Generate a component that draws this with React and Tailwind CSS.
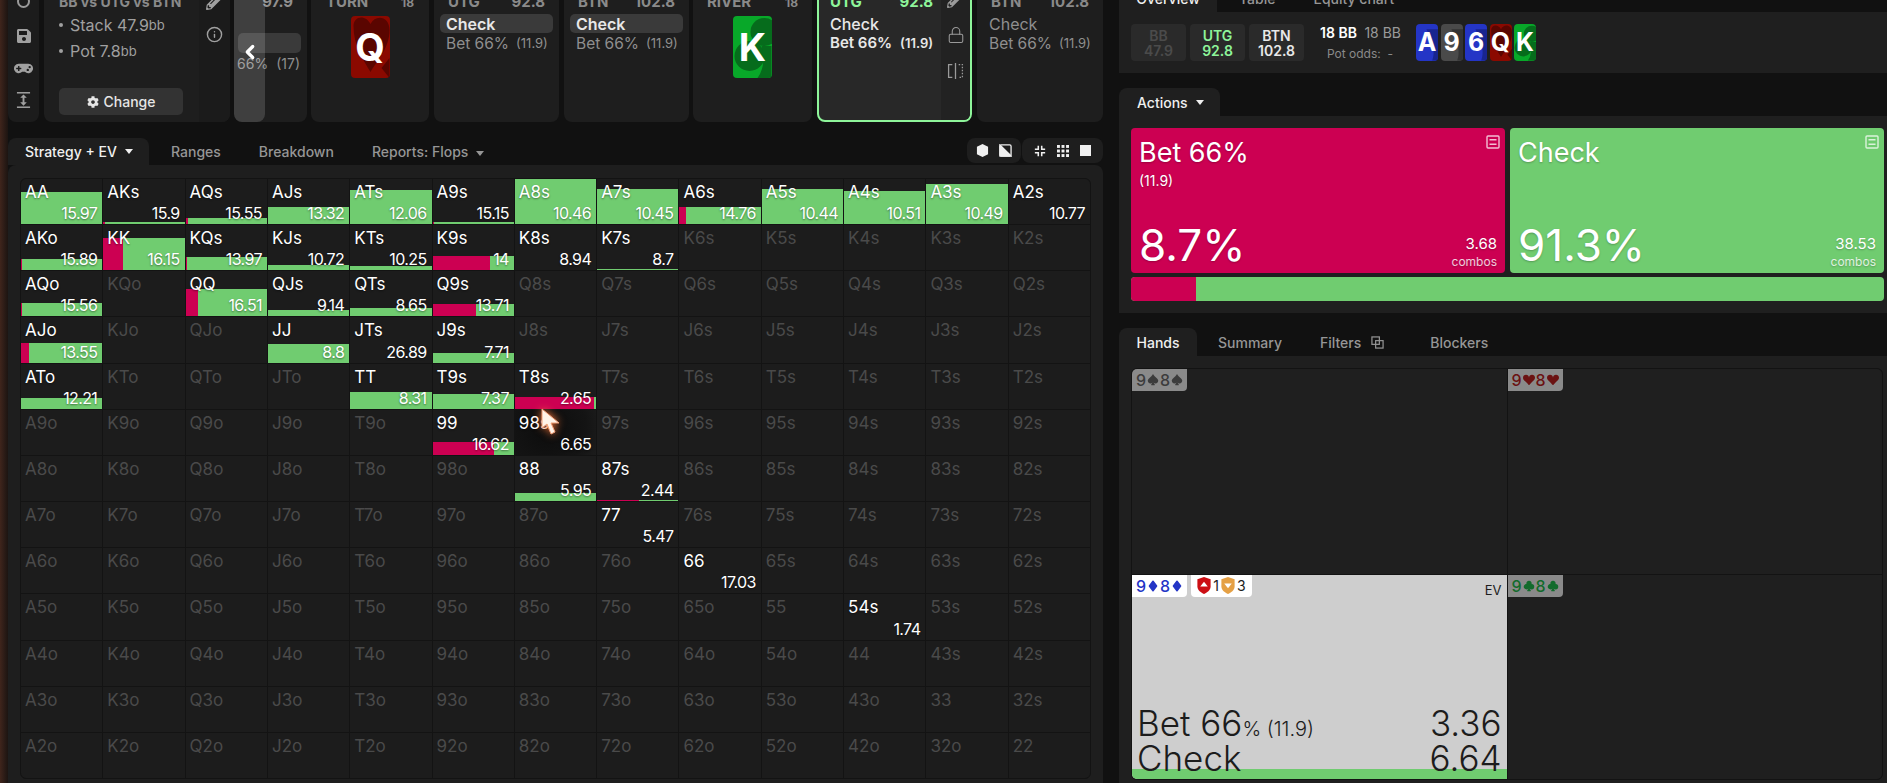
import React from 'react'
import { ChevronLeft, Info, Lock } from 'lucide-react'
import { FaCog, FaGamepad, FaPencilAlt, FaSave } from 'react-icons/fa'
import { BsSuitClubFill, BsSuitDiamondFill, BsSuitHeartFill, BsSuitSpadeFill } from 'react-icons/bs'

const ranks = ['A', 'K', 'Q', 'J', 'T', '9', '8', '7', '6', '5', '4', '3', '2']

// label: [value, bar height px, red share %]
const cells = {
  AA: ['15.97', 32, 0], AKs: ['15.9', 2, 2], AQs: ['15.55', 6, 3], AJs: ['13.32', 17, 0], ATs: ['12.06', 34, 0],
  A9s: ['15.15', 2, 1], A8s: ['10.46', 45, 0], A7s: ['10.45', 35, 0], A6s: ['14.76', 17, 8], A5s: ['10.44', 35, 0],
  A4s: ['10.51', 33, 0], A3s: ['10.49', 40, 0], A2s: ['10.77', 0, 0],
  AKo: ['15.89', 11, 1], KK: ['16.15', 32, 24], KQs: ['13.97', 13, 1], KJs: ['10.72', 5, 0], KTs: ['10.25', 4, 0],
  K9s: ['14', 14, 71], K8s: ['8.94', 0, 0], K7s: ['8.7', 1, 0],
  AQo: ['15.56', 13, 1], QQ: ['16.51', 27, 15], QJs: ['9.14', 6, 0], QTs: ['8.65', 8, 0], Q9s: ['13.71', 12, 53],
  AJo: ['13.55', 20, 10], JJ: ['8.8', 19, 0], JTs: ['26.89', 0, 0], J9s: ['7.71', 10, 0],
  ATo: ['12.21', 11, 0], TT: ['8.31', 17, 0], T9s: ['7.37', 15, 0], T8s: ['2.65', 12, 97],
  99: ['16.62', 13, 75], '98s': ['6.65', 0, 0],
  88: ['5.95', 8, 0], '87s': ['2.44', 1, 52],
  77: ['5.47', 0, 0], 66: ['17.03', 0, 0], '54s': ['1.74', 0, 0],
}

const cellLabel = (r, c) => {
  if (r === c) return ranks[r] + ranks[c]
  return r < c ? ranks[r] + ranks[c] + 's' : ranks[c] + ranks[r] + 'o'
}

const GridCell = ({ label }) => {
  const data = cells[label]
  if (!data) {
    return (
      <div className="bg-[#1c1c1c] pl-1 pt-[3px] text-[17px] leading-5 text-[#4a4a4a]">{label}</div>
    )
  }
  const [value, height, red] = data
  return (
    <div className={`relative overflow-hidden ${label === '98s' ? 'bg-[radial-gradient(circle_at_40%_40%,#0c0c0c,#141414_70%,#1c1c1c)]' : 'bg-[#1c1c1c]'}`}>
      <div className="absolute inset-x-0 bottom-0 flex bg-[#70cc70]" style={{ height }}>
        <div className="bg-[#cc0052]" style={{ width: `${red}%` }} />
      </div>
      <div className="relative flex h-full flex-col justify-between pb-px pl-1 pr-[5px] pt-[3px] text-white [text-shadow:0_1px_2px_rgba(0,0,0,0.45)]">
        <div className="text-[17px] leading-5">{label}</div>
        <div className="text-right text-[16px] leading-5 tracking-[-0.6px]">{value}</div>
      </div>
    </div>
  )
}

const SuitArt = ({ suit, color }) => {
  if (suit === 'heart') {
    return (
      <svg viewBox="0 0 38 62" className="absolute inset-0 h-full w-full">
        <path d="M2 10 C2 0 14 -2 19 8 C24 -2 38 0 38 14 C38 32 26 44 19 56 C12 44 2 30 2 10Z" fill={color} />
        <path d="M38 42 L30 52 L38 62Z" fill={color} />
      </svg>
    )
  }
  if (suit === 'club') {
    return (
      <svg viewBox="0 0 38 62" className="absolute inset-0 h-full w-full">
        <circle cx="31" cy="16" r="14" fill={color} />
        <circle cx="16" cy="40" r="15" fill={color} />
        <path d="M28 30 L38 30 L38 62 L24 62 Q33 50 28 30Z" fill={color} />
      </svg>
    )
  }
  return (
    <svg viewBox="0 0 38 62" className="absolute inset-0 h-full w-full">
      <path d="M38 8 L38 62 L28 62 Q36 40 18 8Z" fill={color} />
    </svg>
  )
}

const BigCard = ({ rank, bg, dark, suit }) => (
  <div className="relative flex h-[62px] w-[39px] items-center justify-center overflow-hidden rounded-[4px]" style={{ backgroundColor: bg }}>
    <SuitArt suit={suit} color={dark} />
    <span className="relative text-[38px] font-bold leading-none text-white">{rank}</span>
  </div>
)

const SmallCard = ({ rank, bg, dark, suit }) => (
  <div className="relative flex h-[37px] w-[22px] items-center justify-center overflow-hidden rounded-[4px]" style={{ backgroundColor: bg }}>
    <SuitArt suit={suit} color={dark} />
    <span className="relative text-[25px] font-bold leading-none text-white">{rank}</span>
  </div>
)

const CardHeader = ({ left, right, className = 'text-[#8a8a8a]' }) => (
  <div className={`flex h-5 items-center justify-between text-[15px] font-bold leading-5 ${className}`}>
    <span>{left}</span>
    <span>{right}</span>
  </div>
)

const ActionCard = ({ pos, stack, width, chip = true }) => (
  <div className={`h-[142px] shrink-0 rounded-b-lg bg-[#1e1e1e] px-[6px] pt-[12px] ${width}`}>
    <div className="px-2"><CardHeader left={pos} right={stack} /></div>
    <div className={`mt-[2px] flex h-[19px] items-center rounded-[5px] px-[6px] text-[16px] ${chip ? 'bg-[#3a3a3a] font-semibold text-[#e8e8e8]' : 'font-normal text-[#8f8f8f]'}`}>Check</div>
    <div className="mt-px flex h-[19px] items-center whitespace-nowrap px-[6px] text-[15.5px] text-[#8f8f8f]">
      Bet 66%<span className="ml-[7px] text-[13px]">(11.9)</span>
    </div>
  </div>
)

const SplitIcon = () => (
  <svg viewBox="0 0 16 16" className="h-[18px] w-[17px]" fill="none" stroke="#9a9a9a" strokeWidth="1.2">
    <path d="M5 2H1.5v12H5" />
    <path d="M8 0.5v15" />
    <path d="M11 2h3.5v12H11" strokeDasharray="1.4 1.4" />
  </svg>
)

const SpreadIcon = () => (
  <svg viewBox="0 0 16 18" className="h-[18px] w-[15px]" fill="#a0a0a0">
    <rect x="1" y="0.5" width="14" height="1.6" />
    <rect x="1" y="15.9" width="14" height="1.6" />
    <path d="M8 3 L11.5 6.5H9v5h2.5L8 15 4.5 11.5H7v-5H4.5Z" />
  </svg>
)

const NoteIcon = () => (
  <svg viewBox="0 0 14 14" className="h-[14px] w-[14px]" fill="none" stroke="rgba(255,255,255,0.75)" strokeWidth="1.4">
    <rect x="1" y="1" width="12" height="12" rx="1" />
    <path d="M3.5 4.8h7M3.5 9.2h7" />
  </svg>
)

const Caret = () => <span className="ml-2 inline-block border-x-[4px] border-t-[5px] border-x-transparent border-t-current align-middle" />

const Shield = ({ fill, up }) => (
  <svg viewBox="0 0 14 18" className="h-[17px] w-[14px]">
    <path d="M7 0 L14 2.5 V10 C14 14 10 16.5 7 18 C4 16.5 0 14 0 10 V2.5Z" fill={fill} />
    <path d={up ? 'M7 5 L11 10 H3Z' : 'M3 7 H11 L7 12Z'} fill="#fff" />
  </svg>
)

const PosChip = ({ pos, stack, className }) => (
  <div className={`flex h-[37px] w-[55px] flex-col items-center justify-center rounded-[4px] bg-[#2a2a2a] text-[14px] font-semibold leading-[15px] ${className}`}>
    <span>{pos}</span>
    <span>{stack}</span>
  </div>
)

const ActionTile = ({ bg, title, sub, pct, combos }) => (
  <div className={`relative flex h-[145px] flex-1 flex-col justify-between rounded-[4px] px-2 pb-[3px] pt-[9px] text-white [text-shadow:0_1px_2px_rgba(0,0,0,0.25)] ${bg}`}>
    <div className="absolute right-[5px] top-[7px]"><NoteIcon /></div>
    <div>
      <div className="text-[27px] leading-8">{title}</div>
      {sub && <div className="mt-[2px] text-[14px] leading-5">{sub}</div>}
    </div>
    <div className="flex items-end justify-between">
      <div className="text-[44px] leading-[50px]">{pct}</div>
      <div className="text-right leading-none">
        <div className="text-[15px] leading-5">{combos}</div>
        <div className="text-[12px] leading-4 text-white/80">combos</div>
      </div>
    </div>
  </div>
)

const HandChip = ({ Suit, className }) => (
  <div className={`flex h-[22px] w-[55px] items-center justify-center gap-px rounded-br-[4px] text-[16px] font-medium ${className}`}>
    9<Suit size={12} />8<Suit size={12} />
  </div>
)

const App = () => {
  return (
    <div className="relative flex h-[783px] w-[1887px] overflow-hidden bg-[#111111] font-[family-name:Inter,sans-serif]">
      <div className="w-2 shrink-0 bg-gradient-to-r from-[#40251c] to-[#1c1411]" />

      <div className="w-[1095px] shrink-0">
        {/* top spot strip, page is scrolled a bit so it gets cut */}
        <div className="relative -mt-5 flex h-[142px] gap-[4px]">
          <div className="flex h-[142px] w-[31px] shrink-0 flex-col items-center rounded-b-lg bg-[#1c1c1c] pt-[15px] text-[#a0a0a0]">
            <div className="h-[13px] w-[13px] rounded-full border-2 border-[#9a9a9a]" />
            <FaSave size={16} className="mt-[20px]" />
            <FaGamepad size={19} className="mt-[15px]" />
            <div className="mt-[13px]"><SpreadIcon /></div>
          </div>

          <div className="ml-px flex h-[142px] w-[186px] shrink-0 rounded-b-lg bg-[#1e1e1e]">
            <div className="flex w-[155px] flex-col pl-[15px] pr-4 pt-[12px]">
              <div className="whitespace-nowrap text-[14px] font-bold leading-5 text-[#8a8a8a]">BB vs UTG vs BTN</div>
              <div className="mt-[1px] flex items-center text-[16px] leading-6 text-[#a0a0a0]"><span className="mr-[7px] h-1 w-1 rounded-full bg-[#a0a0a0]" />Stack 47.9<span className="text-[13px]">bb</span></div>
              <div className="mt-[2px] flex items-center text-[16px] leading-6 text-[#a0a0a0]"><span className="mr-[7px] h-1 w-1 rounded-full bg-[#a0a0a0]" />Pot 7.8<span className="text-[13px]">bb</span></div>
              <button className="mt-[25px] flex h-[27px] items-center justify-center gap-[5px] rounded-[5px] bg-[#333333] text-[14px] font-medium text-[#e6e6e6]"><FaCog size={12} />Change</button>
            </div>
            <div className="flex flex-1 flex-col items-center gap-[16px] rounded-br-lg bg-[#1b1b1b] pt-[12px] text-[#a0a0a0]">
              <FaPencilAlt size={18} />
              <Info size={17} />
            </div>
          </div>

          <div className="flex h-[142px] w-[73px] shrink-0 flex-col items-end rounded-b-lg bg-[#1e1e1e] pr-[6px] pt-[12px] text-[#8f8f8f]">
            <div className="pr-2 text-[15px] font-bold leading-5">97.9</div>
            <div className="mt-[21px] h-5 w-[63px] rounded-[5px] bg-[#3a3a3a]" />
            <div className="mt-[1px] whitespace-nowrap pr-[1px] text-[14px] leading-5">66%<span className="ml-2">(17)</span></div>
          </div>

          <div className="flex h-[142px] w-[118px] shrink-0 flex-col rounded-b-lg bg-[#1e1e1e] px-[15px] pt-[12px]">
            <CardHeader left="TURN" right={<span className="text-[12px]">18</span>} />
            <div className="mt-[4px] flex justify-center"><BigCard rank="Q" bg="#8b0900" dark="#5a0500" suit="heart" /></div>
          </div>

          <div className="ml-px flex gap-[5px]">
            <ActionCard pos="UTG" stack="92.8" width="w-[125px]" />
            <ActionCard pos="BTN" stack="102.8" width="w-[125px]" />
          </div>

          <div className="flex h-[142px] w-[119px] shrink-0 flex-col rounded-b-lg bg-[#1e1e1e] px-[14px] pt-[12px]">
            <CardHeader left="RIVER" right={<span className="text-[12px]">18</span>} />
            <div className="mt-[4px] flex justify-center"><BigCard rank="K" bg="#08a829" dark="#066c1c" suit="club" /></div>
          </div>

          <div className="ml-px flex h-[142px] w-[155px] shrink-0 overflow-hidden rounded-b-lg border-2 border-[#8ef59a] bg-[#282828]">
            <div className="flex-1 pl-[11px] pr-[8px] pt-[10px]">
              <CardHeader left="UTG" right="92.8" className="text-[#8ef59a]" />
              <div className="mt-[2px] flex h-[19px] items-center text-[16px] font-medium text-[#e8e8e8]">Check</div>
              <div className="mt-px flex h-[19px] items-center whitespace-nowrap text-[15px] font-semibold text-[#e8e8e8]">Bet 66%<span className="ml-2 text-[13px]">(11.9)</span></div>
            </div>
            <div className="flex w-[32px] flex-col items-center gap-[18px] bg-[#222222] pt-[9px] text-[#9a9a9a]">
              <FaPencilAlt size={17} />
              <Lock size={18} strokeWidth={1.4} />
              <SplitIcon />
            </div>
          </div>

          <div className="ml-px">
            <ActionCard pos="BTN" stack="102.8" width="w-[126px]" chip={false} />
          </div>

          <div className="absolute left-[226px] top-0 flex h-[142px] w-[31px] items-center justify-center rounded-b-lg bg-white/15 pt-[2px]">
            <ChevronLeft size={22} strokeWidth={3.5} className="text-white" />
          </div>
        </div>

        <div className="mt-4 flex h-[27px] items-start justify-between">
          <div className="flex h-[27px] items-center text-[14px] font-medium text-[#969696]">
            <div className="flex h-[27px] w-[141px] items-center rounded-t-lg bg-[#1e1e1e] pl-[17px] text-[#f0f0f0]">Strategy + EV<Caret /></div>
            <div className="ml-[22px]">Ranges</div>
            <div className="ml-[38px]">Breakdown</div>
            <div className="ml-[38px]">Reports: Flops<Caret /></div>
          </div>
          <div className="flex gap-px text-[#f0f0f0]">
            <div className="flex h-[25px] w-[54px] items-center justify-around rounded-lg bg-[#1e1e1e] px-1">
              <svg viewBox="0 0 14 14" className="h-[13px] w-[13px]" fill="currentColor"><path d="M7 0 L13 3 V11 L7 14 L1 11 V3Z" /></svg>
              <svg viewBox="0 0 14 14" className="h-[13px] w-[13px]" fill="none" stroke="currentColor" strokeWidth="1.4"><rect x="1" y="1" width="12" height="12" rx="1.5" /><path d="M1 1 L13 13 V1Z" fill="currentColor" transform="rotate(180 7 7)" /></svg>
            </div>
            <div className="flex h-[25px] w-[81px] items-center justify-around rounded-lg bg-[#1e1e1e] px-[6px]">
              <svg viewBox="0 0 14 14" className="h-[12px] w-[12px]" fill="none" stroke="currentColor" strokeWidth="1.8"><path d="M5 1v4H1M9 1v4h4M5 13V9H1M9 13V9h4" /></svg>
              <svg viewBox="0 0 14 14" className="h-[12px] w-[12px]" fill="currentColor"><rect width="3.4" height="3.4" /><rect x="5.3" width="3.4" height="3.4" /><rect x="10.6" width="3.4" height="3.4" /><rect y="5.3" width="3.4" height="3.4" /><rect x="5.3" y="5.3" width="3.4" height="3.4" /><rect x="10.6" y="5.3" width="3.4" height="3.4" /><rect y="10.6" width="3.4" height="3.4" /><rect x="5.3" y="10.6" width="3.4" height="3.4" /><rect x="10.6" y="10.6" width="3.4" height="3.4" /></svg>
              <div className="h-[11px] w-[11px] bg-[#f0f0f0]" />
            </div>
          </div>
        </div>

        <div className="h-[618px] rounded-t-lg bg-[#1e1e1e] pl-3 pr-3 pt-[13px]">
          <div className="grid h-[601px] w-[1071px] grid-cols-[repeat(13,minmax(0,1fr))] grid-rows-[repeat(13,minmax(0,1fr))] gap-px overflow-hidden rounded-md border border-[#131313] bg-[#131313]">
            {ranks.map((_, r) => ranks.map((_, c) => {
              const label = cellLabel(r, c)
              return <GridCell key={label} label={label} />
            }))}
          </div>
        </div>
      </div>

      <div className="ml-[16px] flex-1">
        <div className="-mt-[15px] flex h-[27px] items-center text-[14px] font-medium text-[#969696]">
          <div className="flex h-[27px] w-[98px] items-center justify-center rounded-t-lg bg-[#1f1f1f] text-[#f0f0f0]">Overview</div>
          <div className="ml-[22px]">Table</div>
          <div className="ml-[38px]">Equity chart</div>
        </div>
        <div className="flex h-[61px] items-center gap-[4px] bg-[#1f1f1f] pl-3">
          <PosChip pos="BB" stack="47.9" className="text-[#4b4b4b]" />
          <PosChip pos="UTG" stack="92.8" className="text-[#8ef59a]" />
          <PosChip pos="BTN" stack="102.8" className="text-[#e8e8e8]" />
          <div className="ml-[12px] w-[80px] text-center">
            <div className="whitespace-nowrap text-[14px] font-semibold leading-5 text-white">18 BB <span className="ml-1 font-normal text-[#9a9a9a]">18 BB</span></div>
            <div className="mt-[3px] text-[12px] leading-4 text-[#8a8a8a]">Pot odds:&nbsp; -</div>
          </div>
          <div className="ml-[12px] flex gap-[2.5px]">
            <SmallCard rank="A" bg="#2435c6" dark="#182590" suit="diamond" />
            <SmallCard rank="9" bg="#4a4a4a" dark="#333333" suit="spade" />
            <SmallCard rank="6" bg="#2435c6" dark="#182590" suit="diamond" />
            <SmallCard rank="Q" bg="#8b0900" dark="#5a0500" suit="heart" />
            <SmallCard rank="K" bg="#08a829" dark="#066c1c" suit="club" />
          </div>
        </div>

        <div className="mt-[15px] flex h-[28px] w-[101px] items-center rounded-t-lg bg-[#1f1f1f] pl-[18px] text-[14px] font-medium text-[#f0f0f0]">Actions<Caret /></div>
        <div className="h-[197px] bg-[#1f1f1f] pl-3 pr-[3px] pt-3">
          <div className="flex gap-[5px]">
            <ActionTile bg="bg-[#cc0052]" title="Bet 66%" sub="(11.9)" pct="8.7%" combos="3.68" />
            <ActionTile bg="bg-[#70cc70]" title="Check" pct="91.3%" combos="38.53" />
          </div>
          <div className="mt-1 flex h-6 overflow-hidden rounded-[4px] bg-[#70cc70]">
            <div className="w-[65px] bg-[#cc0052]" />
          </div>
        </div>

        <div className="mt-[15px] flex h-[28px] items-center text-[14px] font-medium text-[#969696]">
          <div className="flex h-[28px] w-[78px] items-center justify-center rounded-t-lg bg-[#1f1f1f] text-[#f0f0f0]">Hands</div>
          <div className="ml-[21px]">Summary</div>
          <div className="ml-[38px] flex items-center gap-[10px]">Filters
            <svg viewBox="0 0 14 14" className="h-[13px] w-[13px]" fill="none" stroke="currentColor" strokeWidth="1.3"><rect x="1" y="1" width="8" height="8" /><rect x="5" y="5" width="8" height="8" /></svg>
          </div>
          <div className="ml-[46px]">Blockers</div>
        </div>
        <div className="h-[427px] bg-[#1f1f1f] pl-3 pr-1 pt-3">
          <div className="grid h-[412px] grid-cols-2 grid-rows-2 gap-px overflow-hidden rounded-md border border-[#131313] bg-[#131313]">
            <div className="bg-[#1f1f1f]"><HandChip Suit={BsSuitSpadeFill} className="bg-[#8a8a8a] text-[#3c3c3c]" /></div>
            <div className="bg-[#1f1f1f]"><HandChip Suit={BsSuitHeartFill} className="bg-[#8a8a8a] text-[#6b1212]" /></div>
            <div className="relative flex flex-col justify-between bg-[#cecece] text-[#1c1c1c]">
              <div className="absolute inset-x-0 bottom-0 h-[10px] bg-[#70cc70]" />
              <div className="flex items-start justify-between pr-[5px]">
                <div className="flex gap-1">
                  <HandChip Suit={BsSuitDiamondFill} className="bg-white text-[#2435c6]" />
                  <div className="flex h-[22px] w-[61px] items-center justify-center gap-[2px] rounded-b-[4px] bg-white text-[14px]">
                    <Shield fill="#cc0f14" up />1<Shield fill="#e5a044" />3
                  </div>
                </div>
                <div className="mt-[5px] text-[13px] leading-5">EV</div>
              </div>
              <div className="relative pb-[3px] pl-[5px] pr-[5px] text-[35px] font-light leading-[35px]">
                <div className="flex justify-between">
                  <div>Bet 66<span className="text-[20px] leading-none">% (11.9)</span></div>
                  <div>3.36</div>
                </div>
                <div className="flex justify-between">
                  <div>Check</div>
                  <div>6.64</div>
                </div>
              </div>
            </div>
            <div className="bg-[#1f1f1f]"><HandChip Suit={BsSuitClubFill} className="bg-[#8a8a8a] text-[#126b2c]" /></div>
          </div>
        </div>
      </div>

      {/* mouse cursor caught in the shot */}
      <svg viewBox="0 0 20 28" className="absolute left-[541px] top-[408px] h-[28px] w-[20px] drop-shadow-[0_0_4px_#ff7a3c]">
        <path d="M1 1 L1 20 L6 16 L10 26 L14 24 L10 15 L18 15Z" fill="#fff3e8" stroke="#f2a078" strokeWidth="1" />
      </svg>
    </div>
  )
}

export default App
